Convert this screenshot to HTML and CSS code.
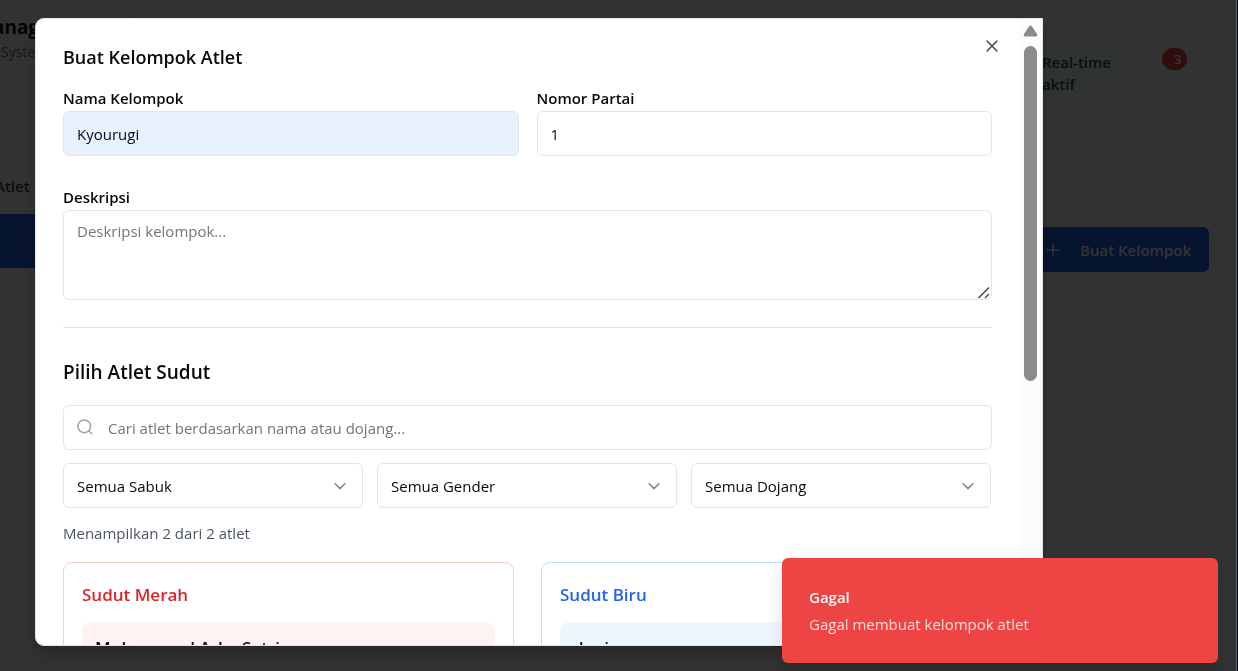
FILE: index.html
```html
<!DOCTYPE html>
<html lang="id">
<head>
<meta charset="utf-8">
<title>Buat Kelompok Atlet</title>
<link rel="stylesheet" href="styles.css">
</head>
<body>
<div class="app">
  <aside class="sidebar">
    <div class="brand">
      <strong class="brand-name">Manag</strong>
      <span class="brand-sub">System</span>
    </div>
    <nav class="nav">
      <a class="nav-link" href="#atlet">Atlet</a>
      <a class="nav-link nav-link-active" href="#kelompok" aria-label="Kelompok"></a>
    </nav>
    <div class="sidebar-foot"></div>
  </aside>
  <main class="main">
    <header class="topbar">
      <div class="status">Real-time aktif</div>
      <span class="count">3</span>
    </header>
    <div class="actions">
      <button class="create" type="button">
        <svg width="18" height="18" viewBox="0 0 24 24" fill="none" stroke="currentColor" stroke-width="2" stroke-linecap="round"><path d="M4 12h16M12 4v16"/></svg>
        Buat Kelompok
      </button>
    </div>
  </main>
</div>

<div class="overlay">
  <section class="dialog" role="dialog" aria-modal="true" aria-labelledby="dialog-title">
    <form class="dialog-body">
      <h2 class="dialog-title" id="dialog-title">Buat Kelompok Atlet</h2>
      <div class="fields">
        <div class="field">
          <label class="label" for="nama">Nama Kelompok</label>
          <input class="control control-filled" id="nama" type="text" value="Kyourugi">
        </div>
        <div class="field">
          <label class="label" for="partai">Nomor Partai</label>
          <input class="control" id="partai" type="text" value="1">
        </div>
      </div>
      <div class="field field-desc">
        <label class="label" for="deskripsi">Deskripsi</label>
        <div class="area-wrap">
          <textarea class="control area" id="deskripsi" placeholder="Deskripsi kelompok..."></textarea>
          <svg class="grip" width="12" height="12" viewBox="0 0 12 12" stroke="#444" stroke-width="1.4" aria-hidden="true"><path d="M.5 11l10.500-10.500M7 11l4-4"/></svg>
        </div>
      </div>
      <hr class="rule">
      <h3 class="section-title">Pilih Atlet Sudut</h3>
      <div class="search">
        <svg class="search-icon" width="18" height="18" viewBox="0 0 24 24" fill="none" stroke="currentColor" stroke-width="2" stroke-linecap="round" aria-hidden="true"><circle cx="11" cy="11" r="8.500"/><path d="M21 21l-4-4"/></svg>
        <input class="control search-input" type="text" aria-label="Cari atlet" placeholder="Cari atlet berdasarkan nama atau dojang...">
      </div>
      <div class="filters">
        <div class="picker">
          <select class="control select" aria-label="Sabuk"><option>Semua Sabuk</option></select>
          <svg class="chevron" width="18" height="18" viewBox="0 0 24 24" fill="none" stroke="currentColor" stroke-width="2" stroke-linecap="round" stroke-linejoin="round" aria-hidden="true"><path d="M5.500 9l6.500 6.500L18.500 9"/></svg>
        </div>
        <div class="picker">
          <select class="control select" aria-label="Gender"><option>Semua Gender</option></select>
          <svg class="chevron" width="18" height="18" viewBox="0 0 24 24" fill="none" stroke="currentColor" stroke-width="2" stroke-linecap="round" stroke-linejoin="round" aria-hidden="true"><path d="M5.500 9l6.500 6.500L18.500 9"/></svg>
        </div>
        <div class="picker">
          <select class="control select" aria-label="Dojang"><option>Semua Dojang</option></select>
          <svg class="chevron" width="18" height="18" viewBox="0 0 24 24" fill="none" stroke="currentColor" stroke-width="2" stroke-linecap="round" stroke-linejoin="round" aria-hidden="true"><path d="M5.500 9l6.500 6.500L18.500 9"/></svg>
        </div>
      </div>
      <p class="summary">Menampilkan 2 dari 2 atlet</p>
      <div class="corners">
        <section class="corner corner-red">
          <h4 class="corner-title">Sudut Merah</h4>
          <div class="athlete">Muhammad Arka Satria</div>
        </section>
        <section class="corner corner-blue">
          <h4 class="corner-title">Sudut Biru</h4>
          <div class="athlete">dani</div>
        </section>
      </div>
    </form>
    <div class="scrollbar" aria-hidden="true">
      <svg width="15" height="12" viewBox="0 0 15 12"><path d="M6 1.500Q7.500-.5 9 1.500L14 9Q15 11 13 11.500H2Q0 11 1 9Z" fill="#8b8b8b"/></svg>
      <div class="thumb"></div>
    </div>
    <button class="close" type="button" aria-label="Tutup">
      <svg width="18" height="18" viewBox="0 0 24 24" fill="none" stroke="currentColor" stroke-width="2" stroke-linecap="round"><path d="M5.500 5.500l13 13M18.500 5.500l-13 13"/></svg>
    </button>
  </section>
</div>

<div class="toast" role="alert">
  <strong class="toast-title">Gagal</strong>
  <span class="toast-text">Gagal membuat kelompok atlet</span>
</div>
</body>
</html>
```
FILE: styles.css
```css
* { box-sizing: border-box; }

html { background: #0d1020; }

body {
  margin: 0 1px 0 0;
  overflow: hidden;
  border-right: 1px solid #5a6072;
  background: #fafafa;
  color: #0a0a0a;
  font: 15px/22px "Open Sans", "Noto Sans", sans-serif;
}

h2, h3, h4, p { margin: 0; }
button, input, select, textarea { font: inherit; color: inherit; }
svg { display: block; flex: none; }

/* Page behind the dialog; the sidebar starts beyond the left edge */
.app {
  display: grid;
  grid-template-columns: 288px 1fr;
  min-height: 100vh;
  margin-left: -159px;
  background: #fafafa;
}

.sidebar {
  display: flex;
  flex-direction: column;
  border-right: 1px solid #e5e5e5;
}
.brand {
  display: flex;
  flex-direction: column;
  align-items: flex-start;
  height: 88px;
  padding: 14px 0 0 134px;
  border-bottom: 1px solid #e5e5e5;
}
.brand-name { font-size: 19px; line-height: 27px; }
.brand-sub {
  padding-left: 26px;
  color: #6b7280;
  font-size: 14px;
}
.nav { flex: 1; padding-top: 72px; }
.nav-link {
  display: block;
  height: 54px;
  padding: 15px 0 0 154px;
  color: #374151;
  font-weight: 600;
  text-decoration: none;
}
.nav-link-active { background: #2563eb; }
.sidebar-foot { height: 67px; border-top: 1px solid #e5e5e5; }

.main { padding: 0 27px; }
.topbar {
  display: flex;
  justify-content: flex-end;
  align-items: flex-start;
  gap: 25px;
  height: 137px;
  padding: 42px 22px 0;
  border-bottom: 1px solid #e5e5e5;
}
.status {
  width: 131px;
  padding: 9px 22px 9px 36px;
  border-radius: 9px;
  background: #f0fdf4;
  color: #166534;
  font-weight: 600;
}
.count {
  width: 25px;
  margin-top: 6px;
  padding-left: 12px;
  border-radius: 12px;
  background: #ef4444;
  color: #fff;
  font-size: 13px;
  font-weight: 600;
}
.actions {
  display: flex;
  justify-content: flex-end;
  margin-top: 90px;
}
.create {
  display: flex;
  align-items: center;
  gap: 18px;
  height: 45px;
  padding: 0 18px;
  border: 0;
  border-radius: 6px;
  background: #2563eb;
  color: #fff;
  font-weight: 600;
}

.overlay {
  position: fixed;
  inset: 0 2px 0 -158px;
  display: flex;
  justify-content: center;
  padding: 18px 0 25px;
  background: rgba(0, 0, 0, .8);
}

.dialog {
  position: relative;
  display: flex;
  width: 100%;
  max-width: 1008px;
  overflow: hidden;
  border: 1px solid #e5e5e5;
  border-radius: 9px 0 9px 9px;
  background: #fff;
  box-shadow: 0 10px 16px rgba(0, 0, 0, .2);
}
.dialog-body {
  flex: 1;
  min-width: 0;
  padding: 27px;
  overflow: auto;
  scrollbar-width: none;
}
.dialog-title {
  margin-bottom: 19px;
  font-size: 18px;
  font-weight: 600;
}
.fields {
  display: grid;
  grid-template-columns: 1fr 1fr;
  gap: 18px;
}
.field-desc { margin-top: 30px; }
.label {
  display: block;
  margin-bottom: 2px;
  font-weight: 600;
}
.control {
  display: block;
  width: 100%;
  height: 45px;
  padding: 0 13px;
  border: 1px solid #e5e5e5;
  border-radius: 6px;
  outline: 0;
  background: #fff;
}
.control::placeholder { color: #757575; opacity: 1; }
.control-filled { background: #e8f0fe; }
.area-wrap { position: relative; }
.area {
  height: 90px;
  padding-top: 9px;
  resize: none;
}
.grip {
  position: absolute;
  right: 2px;
  bottom: 1px;
}
.rule {
  margin: 27px 0 30px;
  border: 0;
  border-top: 1px solid #e5e5e5;
}
.section-title {
  margin-bottom: 19px;
  font-size: 19px;
  font-weight: 600;
  line-height: 28px;
}
.search { position: relative; }
.search-icon {
  position: absolute;
  top: 13px;
  left: 13px;
  color: #9ca3af;
}
.search-input { padding-left: 44px; }
.filters {
  display: grid;
  grid-template-columns: repeat(3, 1fr);
  gap: 14px;
  margin: 13px 1px 0 0;
}
.picker { position: relative; }
.select { appearance: none; }
.chevron {
  position: absolute;
  top: 14px;
  right: 14px;
  color: #858585;
  pointer-events: none;
}
.summary {
  margin: 13px 0 17px;
  color: #4b5563;
  line-height: 24px;
}
.corners {
  display: grid;
  grid-template-columns: 1fr 1fr;
  gap: 27px;
}
.corner {
  padding: 18px;
  border: 1px solid;
  border-radius: 9px;
}
.corner-red { border-color: #fecaca; }
.corner-blue { border-color: #bfdbfe; }
.corner-title {
  margin-bottom: 13px;
  font-size: 17px;
  font-weight: 600;
  line-height: 28px;
}
.corner-red .corner-title { color: #dc2626; }
.corner-blue .corner-title { color: #2563eb; }
.athlete {
  padding: 15px 13px;
  border-radius: 9px;
  font-size: 17px;
  font-weight: 600;
}
.corner-red .athlete { background: #fef2f2; }
.corner-blue .athlete { background: #eff6ff; }

.scrollbar {
  display: flex;
  flex-direction: column;
  align-items: center;
  gap: 9px;
  width: 23px;
  padding-top: 6px;
  background: #fcfcfc;
}
.thumb {
  width: 13px;
  height: 54%;
  border-radius: 7px;
  background: #8b8b8b;
}
.close {
  position: absolute;
  top: 18px;
  right: 41px;
  padding: 0;
  border: 0;
  background: none;
  color: #555;
}

.toast {
  position: fixed;
  right: 20px;
  bottom: 8px;
  display: flex;
  flex-direction: column;
  gap: 3px;
  width: 436px;
  padding: 27px;
  border-radius: 6px;
  background: #ef4444;
  color: #fafafa;
  line-height: 24px;
  box-shadow: 0 10px 16px rgba(0, 0, 0, .12);
}
.toast-title { font-weight: 600; }
.toast-text { color: #fcdcdc; }
```
